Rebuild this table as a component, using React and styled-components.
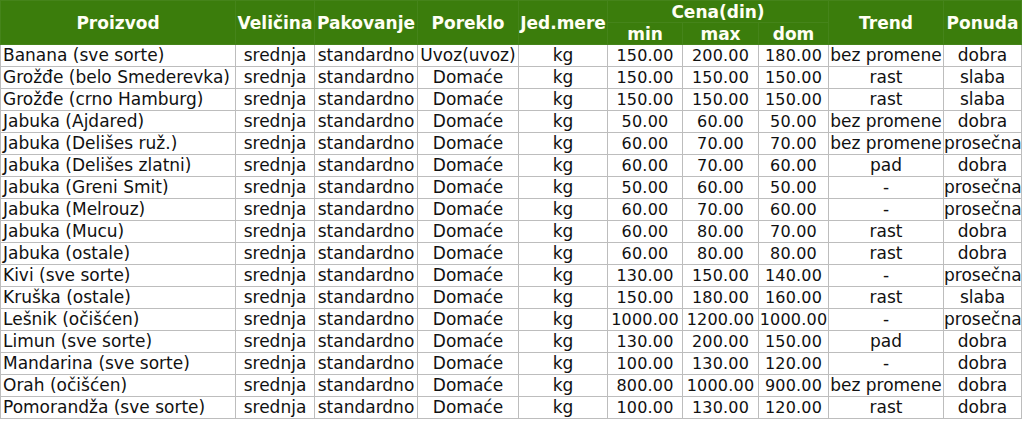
import React from "react";
import styled, { createGlobalStyle } from "styled-components";

const GlobalStyle = createGlobalStyle`
  html, body {
    margin: 0;
    padding: 0;
    background: #ffffff;
  }
  body {
    font-family: "DejaVu Sans", Verdana, sans-serif;
  }
`;

const PriceTable = styled.table`
  border-collapse: collapse;
  table-layout: fixed;
  width: 1022px;
  color: #111;
  border: 1px solid #444;
  border-top: 0;
  font-family: "DejaVu Sans", Verdana, sans-serif;
`;

const HeadCell = styled.th`
  background: #3b7d0c;
  color: #fffff4;
  font-weight: bold;
  font-size: 17px;
  line-height: 20px;
  text-align: center;
  padding: 0;
  height: 21px;
  border: 1px solid #45841a;
  white-space: nowrap;
  overflow: hidden;
`;

const Cell = styled.td`
  height: 21px;
  padding: 0 0 0 ${(p) => (p.$left ? 2 : 0)}px;
  border: 1px solid #bdbdbd;
  font-size: ${(p) => (p.$num ? 16 : 17)}px;
  letter-spacing: ${(p) => (p.$num ? "0.2px" : "0")};
  text-align: ${(p) => (p.$left ? "left" : "center")};
  white-space: nowrap;
  overflow: hidden;
  line-height: 21px;
`;

const cols = [235, 79, 103, 101, 89, 75, 76, 70, 115, 78];

const rows = [
  ["Banana (sve sorte)", "Uvoz(uvoz)", "150.00", "200.00", "180.00", "bez promene", "dobra"],
  ["Grožđe (belo Smederevka)", "Domaće", "150.00", "150.00", "150.00", "rast", "slaba"],
  ["Grožđe (crno Hamburg)", "Domaće", "150.00", "150.00", "150.00", "rast", "slaba"],
  ["Jabuka (Ajdared)", "Domaće", "50.00", "60.00", "50.00", "bez promene", "dobra"],
  ["Jabuka (Delišes ruž.)", "Domaće", "60.00", "70.00", "70.00", "bez promene", "prosečna"],
  ["Jabuka (Delišes zlatni)", "Domaće", "60.00", "70.00", "60.00", "pad", "dobra"],
  ["Jabuka (Greni Smit)", "Domaće", "50.00", "60.00", "50.00", "-", "prosečna"],
  ["Jabuka (Melrouz)", "Domaće", "60.00", "70.00", "60.00", "-", "prosečna"],
  ["Jabuka (Mucu)", "Domaće", "60.00", "80.00", "70.00", "rast", "dobra"],
  ["Jabuka (ostale)", "Domaće", "60.00", "80.00", "80.00", "rast", "dobra"],
  ["Kivi (sve sorte)", "Domaće", "130.00", "150.00", "140.00", "-", "prosečna"],
  ["Kruška (ostale)", "Domaće", "150.00", "180.00", "160.00", "rast", "slaba"],
  ["Lešnik (očišćen)", "Domaće", "1000.00", "1200.00", "1000.00", "-", "prosečna"],
  ["Limun (sve sorte)", "Domaće", "130.00", "200.00", "150.00", "pad", "dobra"],
  ["Mandarina (sve sorte)", "Domaće", "100.00", "130.00", "120.00", "-", "dobra"],
  ["Orah (očišćen)", "Domaće", "800.00", "1000.00", "900.00", "bez promene", "dobra"],
  ["Pomorandža (sve sorte)", "Domaće", "100.00", "130.00", "120.00", "rast", "dobra"],
];

const App = () => {
  return (
    <>
      <GlobalStyle />
      <PriceTable>
        <colgroup>
          {cols.map((w, i) => (
            <col key={"c" + i} style={{ width: w + "px" }} />
          ))}
        </colgroup>
        <thead>
          <tr>
            <HeadCell rowSpan={2}>Proizvod</HeadCell>
            <HeadCell rowSpan={2}>Veličina</HeadCell>
            <HeadCell rowSpan={2}>Pakovanje</HeadCell>
            <HeadCell rowSpan={2}>Poreklo</HeadCell>
            <HeadCell rowSpan={2}>Jed.mere</HeadCell>
            <HeadCell colSpan={3}>Cena(din)</HeadCell>
            <HeadCell rowSpan={2}>Trend</HeadCell>
            <HeadCell rowSpan={2}>Ponuda</HeadCell>
          </tr>
          <tr>
            <HeadCell>min</HeadCell>
            <HeadCell>max</HeadCell>
            <HeadCell>dom</HeadCell>
          </tr>
        </thead>
        <tbody>
          {rows.map((r, i) => (
            <tr key={"r" + i}>
              <Cell $left>{r[0]}</Cell>
              <Cell>srednja</Cell>
              <Cell>standardno</Cell>
              <Cell>{r[1]}</Cell>
              <Cell>kg</Cell>
              <Cell $num>{r[2]}</Cell>
              <Cell $num>{r[3]}</Cell>
              <Cell $num>{r[4]}</Cell>
              <Cell>{r[5]}</Cell>
              <Cell>{r[6]}</Cell>
            </tr>
          ))}
        </tbody>
      </PriceTable>
    </>
  );
};

export default App;
